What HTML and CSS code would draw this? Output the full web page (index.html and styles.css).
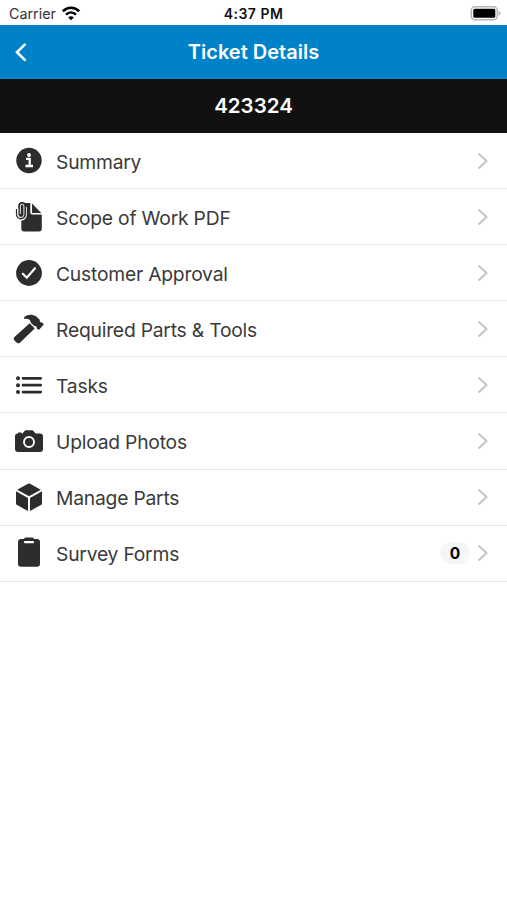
FILE: index.html
```
<!DOCTYPE html>
<html lang="en">
<head>
    <meta charset="UTF-8">
    <meta name="viewport" content="width=device-width, initial-scale=1.0">
    <title>Ticket Details</title>
    <link rel="stylesheet" href="styles.css">
</head>
<body>
    <!-- Status bar -->
    <div class="status-bar">
        <div class="status-left">
            <span class="carrier">Carrier</span>
            <svg class="wifi" width="20" height="16" viewBox="0 0 20 16">
                <path d="M1.800 5.200C6.500 .6 13.500 .6 18.200 5.200" fill="none" stroke="#000" stroke-width="2.700"/>
                <path d="M5 8.700C8 5.800 12 5.800 15 8.700" fill="none" stroke="#000" stroke-width="2.500"/>
                <path d="M10 14.300L7.200 11.500Q10 9.100 12.800 11.500Z"/>
            </svg>
        </div>
        <span class="clock">4:37 PM</span>
        <div class="status-right">
            <svg width="32" height="16" viewBox="0 0 32 16">
                <rect x="2.300" y=".8" width="26" height="13" rx="3.800" fill="#fff" stroke="#b5b5b5" stroke-width="1.500"/>
                <rect x="4.300" y="2.800" width="22" height="9" rx="1.500"/>
                <path d="M29.500 4.800Q31.500 5.800 31.500 7.300T29.500 9.800Z" fill="#b5b5b5"/>
            </svg>
        </div>
    </div>

    <!-- Header -->
    <header class="nav-bar">
        <button class="back-btn" aria-label="Back">
            <svg width="16" height="24" viewBox="0 0 16 24"><path d="M12.500 3.800L4 12.200L12.500 20.600" fill="none" stroke="#fff" stroke-width="2.600"/></svg>
        </button>
        <h1 class="nav-title">Ticket Details</h1>
    </header>
    <div class="ticket-number">423324</div>

    <!-- Options -->
    <ul class="menu">
        <li class="menu-item">
            <svg class="menu-icon" viewBox="0 0 32 32">
                <circle cx="16" cy="15.500" r="12.700"/>
                <circle class="cut" cx="16" cy="10" r="1.900"/>
                <path class="line" d="M13 13.800H16.700V20.800M12.500 21H20" stroke-width="2.300"/>
            </svg>
            <span class="menu-label">Summary</span>
            <svg class="chevron" viewBox="0 0 12 18"><path d="M1.500 1.500L9.500 9L1.500 16.500"/></svg>
        </li>
        <li class="menu-item">
            <svg class="menu-icon" viewBox="0 0 32 32">
                <path d="M11 2H17.300V11.500Q17.300 13.500 19.300 13.500H28.800V27.500Q28.800 30.500 25.800 30.500H11Q8.300 30.500 8.300 27.500V5Q8.300 2 11 2Z"/>
                <path d="M19 2.600L28.300 11.900H19Z"/>
                <path class="line" d="M12.700 6V14A4.500 4.500 0 0 1 7.500 18.600" stroke-width="2.200"/>
                <rect x="5.500" y="1.500" width="7" height="15" rx="3.500"/>
                <path class="dark" d="M3.600 8V13.500A4.300 4.300 0 0 0 12.200 13.500V4.800A3.100 3.100 0 0 0 6 4.800V13.500A1.600 1.600 0 0 0 9.500 13.500V6.500" stroke-width="1.400"/>
                <path class="line" d="M4.900 7.500V13.500A3 3 0 0 0 10.900 13.500V5A1.800 1.800 0 0 0 7.300 5V13" stroke-width=".9"/>
            </svg>
            <span class="menu-label">Scope of Work PDF</span>
            <svg class="chevron" viewBox="0 0 12 18"><path d="M1.500 1.500L9.500 9L1.500 16.500"/></svg>
        </li>
        <li class="menu-item">
            <svg class="menu-icon" viewBox="0 0 32 32">
                <circle cx="16" cy="16" r="12.900"/>
                <path class="line" d="M9.800 16.800L13.800 20.800L22 11.200" stroke-width="2.100" stroke-linecap="round"/>
            </svg>
            <span class="menu-label">Customer Approval</span>
            <svg class="chevron" viewBox="0 0 12 18"><path d="M1.500 1.500L9.500 9L1.500 16.500"/></svg>
        </li>
        <li class="menu-item">
            <svg class="menu-icon" viewBox="0 0 32 32">
                <path d="M11 4.500C13.500 1.300 19.500 .8 23 3.300L26.300 6.200Q27 7 26.800 8.600L27.800 9.600L28.800 9.300L30.800 11.500L25.800 17L23.500 15.200L23.800 13.900L22.600 12.900Q21.300 13.300 20.100 12.100L17.600 9.600C17.800 6.700 15.500 5.300 11 5.800Z"/>
                <path d="M16.700 10.300L21.700 15.400L7.200 29.400Q5.200 31.200 3.300 29.300L1.500 27.500Q-.2 25.600 1.700 23.800Z"/>
            </svg>
            <span class="menu-label">Required Parts &amp; Tools</span>
            <svg class="chevron" viewBox="0 0 12 18"><path d="M1.500 1.500L9.500 9L1.500 16.500"/></svg>
        </li>
        <li class="menu-item">
            <svg class="menu-icon" viewBox="0 0 32 32">
                <path class="dark" d="M10 9.300H27.700M10 16.200H27.700M10 23.100H27.700" stroke-width="2.700" stroke-linecap="round"/>
                <circle cx="5" cy="9.300" r="2"/>
                <circle cx="5" cy="16.200" r="2"/>
                <circle cx="5" cy="23.100" r="2"/>
            </svg>
            <span class="menu-label">Tasks</span>
            <svg class="chevron" viewBox="0 0 12 18"><path d="M1.500 1.500L9.500 9L1.500 16.500"/></svg>
        </li>
        <li class="menu-item">
            <svg class="menu-icon" viewBox="0 0 32 32">
                <path d="M4.500 8.500H5V7.500H8.500V8.500H9.500L11.500 6Q12 5.300 13 5.300H19Q20 5.300 20.500 6L22.500 8.500H27Q30 8.500 30 11.500V24Q30 27 27 27H5Q2 27 2 24V11.500Q2 8.500 4.500 8.500Z"/>
                <circle class="line" cx="16" cy="17" r="5" stroke-width="1.900"/>
            </svg>
            <span class="menu-label">Upload Photos</span>
            <svg class="chevron" viewBox="0 0 12 18"><path d="M1.500 1.500L9.500 9L1.500 16.500"/></svg>
        </li>
        <li class="menu-item">
            <svg class="menu-icon" viewBox="0 0 32 32">
                <path d="M15 2.700Q16 2.200 17 2.700L27.800 8.700L16 15.300L4.200 8.700Z"/>
                <path d="M3 10.200L15 16.900V30L4.100 24.100Q3 23.500 3 22.200Z"/>
                <path d="M29 10.200L17 16.900V30L27.900 24.100Q29 23.500 29 22.200Z"/>
            </svg>
            <span class="menu-label">Manage Parts</span>
            <svg class="chevron" viewBox="0 0 12 18"><path d="M1.500 1.500L9.500 9L1.500 16.500"/></svg>
        </li>
        <li class="menu-item">
            <svg class="menu-icon" viewBox="0 0 32 32">
                <path d="M8 2H10.800Q11.300 .5 12.800 .5H19.200Q20.700 .5 21.200 2H24Q27 2 27 5V26.800Q27 29.800 24 29.800H8Q5 29.800 5 26.800V5Q5 2 8 2Z"/>
                <rect class="cut" x="11" y="4" width="10" height="2.200" rx=".8"/>
            </svg>
            <span class="menu-label">Survey Forms</span>
            <span class="badge">0</span>
            <svg class="chevron" viewBox="0 0 12 18"><path d="M1.500 1.500L9.500 9L1.500 16.500"/></svg>
        </li>
    </ul>
</body>
</html>
```
FILE: styles.css
```
* {
    box-sizing: border-box;
}

body {
    margin: 0;
    min-height: 100vh;
    background-color: #fff;
    font-family: Inter, 'Liberation Sans', sans-serif;
    color: #3a3a3a;
}

/* Status bar */
.status-bar {
    display: grid;
    grid-template-columns: 1fr auto 1fr;
    align-items: center;
    height: 25.4px;
    padding: 2px 6px 0 9px;
    color: #111;
}

.status-left {
    display: flex;
    align-items: center;
    gap: 5px;
}

.carrier {
    font-size: 14.3px;
    color: #333;
}

.clock {
    margin-right: 3px;
    font-size: 14px;
    font-weight: 600;
    letter-spacing: 0.5px;
}

.status-right {
    display: flex;
    justify-content: flex-end;
}

/* Header */
.nav-bar {
    display: grid;
    grid-template-columns: 40px 1fr 40px;
    align-items: center;
    height: 53.8px;
    background-color: #0082c8;
    color: #fff;
}

.back-btn {
    display: flex;
    padding: 0 0 0 13px;
    border: none;
    background: none;
    cursor: pointer;
}

.nav-title {
    margin: 0;
    font-size: 20px;
    font-weight: 600;
    text-align: center;
}

.ticket-number {
    height: 53.8px;
    background-color: #111;
    color: #fff;
    font-size: 20.5px;
    font-weight: 600;
    line-height: 54px;
    text-align: center;
}

/* Options */
.menu {
    margin: 0;
    padding: 0;
    list-style: none;
}

.menu-item {
    display: flex;
    align-items: center;
    height: 56.1px;
    padding: 0 18px 0 13px;
    border-bottom: 1px solid #e6e6e6;
}

.menu-icon {
    width: 32px;
    height: 32px;
    margin-right: 11px;
    fill: #2d2d2d;
}

.menu-icon .cut {
    fill: #fff;
}

.menu-icon .line {
    fill: none;
    stroke: #fff;
}

.menu-icon .dark {
    fill: none;
    stroke: #2d2d2d;
}

.menu-label {
    flex: 1;
    padding-top: 2px;
    font-size: 19.3px;
    letter-spacing: -0.22px;
}

.badge {
    width: 30px;
    height: 22px;
    margin-right: 7px;
    border-radius: 11px;
    background-color: #f5f6f8;
    color: #000;
    font-size: 15.5px;
    font-weight: 700;
    line-height: 23px;
    text-align: center;
}

.chevron {
    width: 12px;
    height: 18px;
    fill: none;
    stroke: #c4c4c4;
    stroke-width: 2;
}
```
